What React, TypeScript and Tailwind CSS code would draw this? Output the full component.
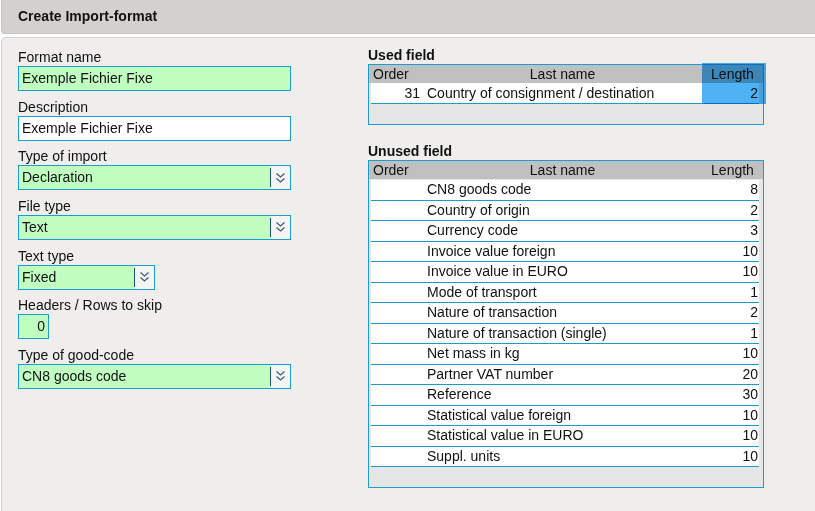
import { ReactNode } from "react";

const unusedFields = [
  { name: "CN8 goods code", length: 8 },
  { name: "Country of origin", length: 2 },
  { name: "Currency code", length: 3 },
  { name: "Invoice value foreign", length: 10 },
  { name: "Invoice value in EURO", length: 10 },
  { name: "Mode of transport", length: 1 },
  { name: "Nature of transaction", length: 2 },
  { name: "Nature of transaction (single)", length: 1 },
  { name: "Net mass in kg", length: 10 },
  { name: "Partner VAT number", length: 20 },
  { name: "Reference", length: 30 },
  { name: "Statistical value foreign", length: 10 },
  { name: "Statistical value in EURO", length: 10 },
  { name: "Suppl. units", length: 10 },
];

const ChevronsDown = () => (
  <svg width="11" height="12" viewBox="0 0 11 12" fill="none">
    <polyline points="1.5,1.5 5.5,5 9.5,1.5" stroke="#3d5a78" strokeWidth="1.2" />
    <polyline points="1.5,6.5 5.5,10 9.5,6.5" stroke="#3d5a78" strokeWidth="1.2" />
  </svg>
);

const Field = ({ label, children }: { label: string; children: ReactNode }) => (
  <div className="mb-[7.67px]">
    <div className="h-[17px] leading-[17px]">{label}</div>
    {children}
  </div>
);

const TextInput = ({ value, green }: { value: string; green?: boolean }) => (
  <div
    className={`flex h-[25px] w-[273px] items-center border border-[#1c9dd0] pl-[3px] ${
      green ? "bg-[#c0ffc0]" : "bg-white"
    }`}
  >
    {value}
  </div>
);

const Select = ({ value, width }: { value: string; width: string }) => (
  <div className={`flex h-[25px] items-center border border-[#1c9dd0] bg-[#c0ffc0] ${width}`}>
    <div className="flex-1 pl-[3px]">{value}</div>
    <div className="h-[19px] w-[1px] bg-[#1d4f6e]" />
    <div className="flex h-full w-[19px] items-center justify-center bg-[#f3f5f5]">
      <ChevronsDown />
    </div>
  </div>
);

const TableHeader = () => (
  <div className="flex h-[18px] items-center bg-[#c0c0c0] leading-[18px]">
    <div className="w-[54px] pl-[4px]">Order</div>
    <div className="w-[279px] text-center">Last name</div>
    <div className="w-[61px] text-center">Length</div>
  </div>
);

const Row = ({ order, name, length, height }: { order?: number; name: string; length: number; height: string }) => (
  <div className={`ml-[2px] mr-[4px] flex items-center border-b border-[#1a9bc8] bg-white ${height}`}>
    <div className="w-[52px] pr-[3px] text-right">{order ?? ""}</div>
    <div className="w-[279px] pl-[4px]">{name}</div>
    <div className="w-[57px] pr-[1px] text-right">{length}</div>
  </div>
);

export default function App() {
  return (
    <div className="h-[511px] w-[815px] overflow-hidden bg-white font-['Liberation_Sans',Arial,sans-serif] text-[14px] text-[#111]">
      <div className="ml-[1px] flex h-[34px] items-center rounded-bl-[4px] border-b border-l border-[#c6c3c1] bg-[#d3d0ce] pl-[16px] text-[14px] font-bold">
        Create Import-format
      </div>

      <div className="ml-[1px] mt-[3px] flex h-[474px] rounded-tl-[5px] border-l border-t border-[#d4d2d0] bg-[#efeeed]">
        {/* Left form */}
        <div className="w-[366px] pl-[16px] pt-[11px]">
          <Field label="Format name">
            <TextInput value="Exemple Fichier Fixe" green />
          </Field>
          <Field label="Description">
            <TextInput value="Exemple Fichier Fixe" />
          </Field>
          <Field label="Type of import">
            <Select value="Declaration" width="w-[273px]" />
          </Field>
          <Field label="File type">
            <Select value="Text" width="w-[273px]" />
          </Field>
          <Field label="Text type">
            <Select value="Fixed" width="w-[137px]" />
          </Field>
          <Field label="Headers / Rows to skip">
            <div className="flex h-[25px] w-[31px] items-center justify-end border border-[#1c9dd0] bg-[#c0ffc0] pr-[3px]">
              0
            </div>
          </Field>
          <Field label="Type of good-code">
            <Select value="CN8 goods code" width="w-[273px]" />
          </Field>
        </div>

        {/* Right tables */}
        <div className="pt-[9px]">
          <div className="h-[17px] text-[14px] font-bold leading-[17px]">Used field</div>
          <div className="relative w-[396px] border border-[#1c9dd0] bg-[#e6e6e6]">
            <TableHeader />
            <Row order={31} name="Country of consignment / destination" length={2} height="h-[21px]" />
            <div className="h-[20px]" />
            <div className="pointer-events-none absolute left-[333px] top-[-2px] h-[41px] w-[64px] bg-[#4fb2f5] mix-blend-multiply" />
          </div>

          <div className="mt-[18px] h-[17px] text-[14px] font-bold leading-[17px]">Unused field</div>
          <div className="w-[396px] border border-[#1c9dd0] bg-[#e6e6e6]">
            <TableHeader />
            <div className="h-[1px]" />
            {unusedFields.map((f) => (
              <Row key={f.name} name={f.name} length={f.length} height="h-[20.5px]" />
            ))}
            <div className="h-[20px]" />
          </div>
        </div>
      </div>
    </div>
  );
}
